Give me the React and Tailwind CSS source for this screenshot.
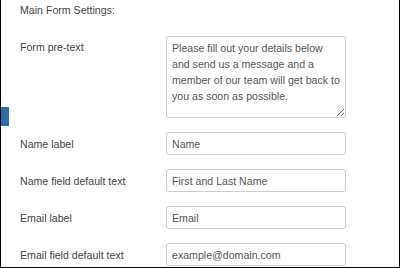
const rows = [
  { label: 'Name label', value: 'Name' },
  { label: 'Name field default text', value: 'First and Last Name' },
  { label: 'Email label', value: 'Email' },
  { label: 'Email field default text', value: 'example@domain.com' },
];

export default function App() {
  return (
    <div className="relative h-[268px] w-[400px] overflow-hidden border-x border-b border-black bg-white font-['Liberation_Sans',Arial,sans-serif] text-[10.6px] text-[#444]">
      {/* left blue tab */}
      <div className="absolute left-0 top-[107px] h-[19px] w-[8px] bg-[#2f6ea8]" />

      <div className="pl-[19px] pt-[1px]">
        <div className="leading-[18px]">Main Form Settings:</div>

        <div className="mt-[17px] flex">
          <div className="w-[146px] pt-[2px] leading-[18px]">Form pre-text</div>
          <textarea
            readOnly
            defaultValue="Please fill out your details below and send us a message and a member of our team will get back to you as soon as possible."
            className="h-[82px] w-[180px] resize rounded-[3px] border border-[#ccc] px-[5px] pt-[3px] text-[10.6px] leading-[16px] text-[#555] outline-none"
          />
        </div>

        {rows.map((r) => (
          <div key={r.label} className="mt-[14px] flex items-center">
            <div className="w-[146px] leading-[18px]">{r.label}</div>
            <input
              readOnly
              value={r.value}
              className="h-[23px] w-[180px] rounded-[3px] border border-[#ccc] px-[5px] text-[10.6px] text-[#555] outline-none"
            />
          </div>
        ))}
      </div>
    </div>
  );
}
